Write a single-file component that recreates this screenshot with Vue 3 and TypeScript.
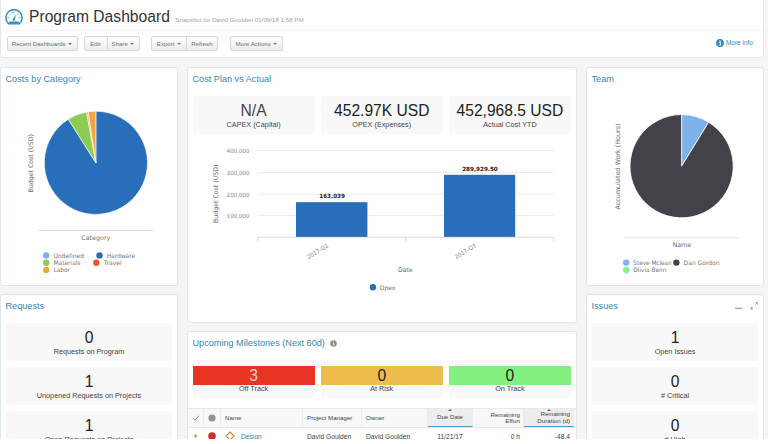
<script setup lang="ts">
interface Kpi { value: string; label: string; tone?: string }
interface Slice { from: number; to: number; color: string }
interface Legend { x: number; y: number; tx: number; w: number; text: string; color: string }

const costKpis: Kpi[] = [
  { value: 'N/A', label: 'CAPEX (Capital)', tone: 'muted' },
  { value: '452.97K USD', label: 'OPEX (Expenses)' },
  { value: '452,968.5 USD', label: 'Actual Cost YTD' },
]
const requests: Kpi[] = [
  { value: '0', label: 'Requests on Program' },
  { value: '1', label: 'Unopened Requests on Projects' },
  { value: '1', label: 'Open Requests on Projects' },
]
const issues: Kpi[] = [
  { value: '1', label: 'Open Issues' },
  { value: '0', label: '# Critical' },
  { value: '0', label: '# High' },
]
const milestones: Kpi[] = [
  { value: '3', label: 'Off Track', tone: 'red' },
  { value: '0', label: 'At Risk', tone: 'amber' },
  { value: '0', label: 'On Track', tone: 'green' },
]

const costSlices: Slice[] = [
  { from: 0, to: 327.6, color: '#286eb9' },
  { from: 327.6, to: 349.6, color: '#8bcd50' },
  { from: 349.6, to: 351.4, color: '#dd9a66' },
  { from: 351.4, to: 360, color: '#f2a53c' },
]
const teamSlices: Slice[] = [
  { from: 0, to: 31.6, color: '#7eb2ea' },
  { from: 31.6, to: 360, color: '#434248' },
]
const costLegend: Legend[] = [
  { x: 46.2, y: 255.4, tx: 53.5, w: 30.5, text: 'Undefined', color: '#7eb2ea' },
  { x: 99.5, y: 255.4, tx: 107, w: 28, text: 'Hardware', color: '#286eb9' },
  { x: 46.2, y: 262.7, tx: 53.5, w: 27, text: 'Materials', color: '#8bcd50' },
  { x: 96.3, y: 262.7, tx: 103.7, w: 18, text: 'Travel', color: '#ea5a28' },
  { x: 46.2, y: 270, tx: 53.5, w: 16.5, text: 'Labor', color: '#f2a53c' },
]
const teamLegend: Legend[] = [
  { x: 626.2, y: 262.6, tx: 633.3, w: 38.4, text: 'Steve Mclean', color: '#7eb2ea' },
  { x: 676.4, y: 262.6, tx: 683.6, w: 36, text: 'Dan Gordon', color: '#434248' },
  { x: 626.2, y: 270, tx: 633.3, w: 33, text: 'Olivia Benn', color: '#8bf08a' },
]
const grid = [
  { y: 150.5, text: '400,000' },
  { y: 172.5, text: '300,000' },
  { y: 194.2, text: '200,000' },
  { y: 215.5, text: '100,000' },
]

function wedge(cx: number, cy: number, r: number, s: Slice): string {
  const pt = (deg: number) => {
    const a = (deg * Math.PI) / 180
    return `${(cx + r * Math.sin(a)).toFixed(2)} ${(cy - r * Math.cos(a)).toFixed(2)}`
  }
  const large = s.to - s.from > 180 ? 1 : 0
  return `M${cx} ${cy}L${pt(s.from)}A${r} ${r} 0 ${large} 1 ${pt(s.to)}Z`
}
</script>

<template>
  <div class="page">
    <header class="head">
      <div class="title-row">
        <svg class="gauge" viewBox="0 0 18 16">
          <path d="M3.5 14.6H14.5C16.3 13 17.1 11 17.1 8.7A8.1 8 0 0 0 .9 8.7C.9 11 1.7 13 3.5 14.6Z" fill="#fff" stroke="#3592c8" stroke-width="1.6" stroke-linejoin="round" />
          <path d="M9 2.9V4.3M4.9 4.6L5.8 5.6M13.1 4.6L12.2 5.6M3.2 8.7H4.6M14.8 8.7H13.4M6.8 3.4L7.1 4.2" stroke="#3592c8" stroke-width=".9" />
          <path d="M10.8 5.2L10 10.6A1.2 1.2 0 1 1 8.1 9.7Z" fill="#3592c8" />
          <path d="M4 12.5H14L13.6 14.4H4.4Z" fill="#3592c8" />
        </svg>
        <h1>Program Dashboard</h1>
        <span class="snap">Snapshot for David Goulden 01/09/18 1:58 PM</span>
      </div>
      <div class="tools">
        <div class="group g1"><button>Recent Dashboards<i class="caret"></i></button></div>
        <div class="group g2"><button class="edit">Edit</button><button>Share<i class="caret"></i></button></div>
        <div class="group g3"><button class="export">Export<i class="caret"></i></button><button>Refresh</button></div>
        <div class="group g4"><button>More Actions<i class="caret"></i></button></div>
        <a class="more">
          <svg viewBox="0 0 8 8"><circle cx="4" cy="4" r="3.9" fill="#2f8fc6" /><path d="M3.2 3.4H4.5V6M3.1 6H5.1" fill="none" stroke="#fff" stroke-width=".9" /><circle cx="4" cy="2" r=".65" fill="#fff" /></svg>
          More info
        </a>
      </div>
    </header>

    <main class="board">
      <div class="col">
        <section class="card pie-card">
          <h2>Costs by Category</h2>
          <svg class="chart" viewBox="1 90 176 195">
            <path v-for="s in costSlices" :key="s.from" :d="wedge(95.9, 162.8, 51.6, s)" :fill="s.color" stroke="#fff" stroke-width=".6" />
            <text class="axis" transform="translate(33.2 192.5) rotate(-90)" textLength="58.5" lengthAdjust="spacingAndGlyphs">Budget Cost (USD)</text>
            <path d="M38.5 230.5H153" stroke="#d3dce8" stroke-width=".9" />
            <text class="axis" x="81.3" y="240" textLength="29" lengthAdjust="spacingAndGlyphs">Category</text>
            <g v-for="l in costLegend" :key="l.text">
              <circle :cx="l.x" :cy="l.y" r="3.2" :fill="l.color" />
              <text class="leg" :x="l.tx" :y="l.y + 2.4" :textLength="l.w" lengthAdjust="spacingAndGlyphs">{{ l.text }}</text>
            </g>
          </svg>
        </section>
        <section class="card grow">
          <h2>Requests</h2>
          <div class="stack">
            <div v-for="k in requests" :key="k.label" class="tile"><b>{{ k.value }}</b><span>{{ k.label }}</span></div>
          </div>
        </section>
      </div>

      <div class="col">
        <section class="card plan">
          <h2>Cost Plan vs Actual</h2>
          <div class="kpis">
            <div v-for="k in costKpis" :key="k.label" class="tile" :class="k.tone"><b>{{ k.value }}</b><span>{{ k.label }}</span></div>
          </div>
          <svg class="chart" viewBox="188 134 388 188">
            <g v-for="g in grid" :key="g.text">
              <path :d="`M257.5 ${g.y}H553.5`" stroke="#e6e6e6" stroke-width=".8" />
              <text class="tick" x="226.6" :y="g.y + 2.6" textLength="23" lengthAdjust="spacingAndGlyphs">{{ g.text }}</text>
            </g>
            <rect x="296" y="202.2" width="71.4" height="34.8" fill="#286eb9" />
            <rect x="444" y="174.8" width="71.2" height="62.2" fill="#286eb9" />
            <path d="M257.5 242V237.3H553.5V242M405.5 237.3V242" fill="none" stroke="#ccd6df" stroke-width=".8" />
            <text class="val" x="319.3" y="198.3" textLength="25.6" lengthAdjust="spacingAndGlyphs">163,039</text>
            <text class="val" x="462.2" y="171" textLength="35.6" lengthAdjust="spacingAndGlyphs">289,929.50</text>
            <text class="axis" transform="translate(218 223) rotate(-90)" textLength="58.5" lengthAdjust="spacingAndGlyphs">Budget Cost (USD)</text>
            <text class="tick" transform="translate(308.5 259.3) rotate(-32)" textLength="24" lengthAdjust="spacingAndGlyphs">2017-Q2</text>
            <text class="tick" transform="translate(456.2 259.3) rotate(-32)" textLength="24" lengthAdjust="spacingAndGlyphs">2017-Q3</text>
            <text class="axis" x="398" y="272" textLength="14.6" lengthAdjust="spacingAndGlyphs">Date</text>
            <circle cx="372.9" cy="287.2" r="3.2" fill="#286eb9" />
            <text class="leg" x="379.8" y="289.7" textLength="15.4" lengthAdjust="spacingAndGlyphs">Opex</text>
          </svg>
        </section>
        <section class="card grow">
          <h2>Upcoming Milestones (Next 60d)
            <svg class="hint" viewBox="0 0 8 8"><circle cx="4" cy="4" r="3.7" fill="#8a8a8a" /><path d="M3.2 3.5H4.4V6M3.1 6H5" fill="none" stroke="#fff" stroke-width=".8" /><circle cx="4" cy="2.1" r=".6" fill="#fff" /></svg>
          </h2>
          <div class="kpis bands">
            <div v-for="k in milestones" :key="k.label" class="tile" :class="k.tone"><b>{{ k.value }}</b><span>{{ k.label }}</span></div>
          </div>
          <div class="row thead">
            <div class="c ic"><svg viewBox="0 0 8 8"><path d="M1.2 4.4L3 6.2L6.8 1.8" fill="none" stroke="#777" stroke-width=".9" /></svg></div>
            <div class="c ic"><svg viewBox="0 0 8 8"><circle cx="4" cy="4" r="3.6" fill="#929292" /></svg></div>
            <div class="c">Name</div>
            <div class="c">Project Manager</div>
            <div class="c">Owner</div>
            <div class="c sorted mid"><i class="up"></i>Due Date</div>
            <div class="c right">Remaining<br />Effort</div>
            <div class="c right sorted"><i class="up"></i>Remaining<br />Duration (d)</div>
          </div>
          <div class="row">
            <div class="c ic"><svg viewBox="0 0 8 8"><path d="M2.6 1.4L5.4 4L2.6 6.6Z" fill="#6cbf2e" /></svg></div>
            <div class="c ic"><svg viewBox="0 0 8 8"><circle cx="4" cy="4" r="3.8" fill="#d42a22" /></svg></div>
            <div class="c name"><svg viewBox="0 0 10 10"><path d="M5 1L9 5L5 9L1 5Z" fill="#fff" stroke="#d08238" stroke-width="1.1" /></svg><a>Design</a></div>
            <div class="c">David Goulden</div>
            <div class="c">David Goulden</div>
            <div class="c mid">11/21/17</div>
            <div class="c right">0 h</div>
            <div class="c right">-48.4</div>
          </div>
        </section>
      </div>

      <div class="col">
        <section class="card pie-card">
          <h2>Team</h2>
          <svg class="chart" viewBox="587 90 176 195">
            <path v-for="s in teamSlices" :key="s.from" :d="wedge(681.6, 166.2, 51.6, s)" :fill="s.color" stroke="#fff" stroke-width=".8" />
            <text class="axis" transform="translate(619.6 209.5) rotate(-90)" textLength="86" lengthAdjust="spacingAndGlyphs">Accumulated Work (Hours)</text>
            <path d="M624.5 237.8H739" stroke="#d9e1ea" stroke-width=".8" />
            <text class="axis" x="672.4" y="247.2" textLength="18.8" lengthAdjust="spacingAndGlyphs">Name</text>
            <g v-for="l in teamLegend" :key="l.text">
              <circle :cx="l.x" :cy="l.y" r="3.2" :fill="l.color" />
              <text class="leg" :x="l.tx" :y="l.y + 2.4" :textLength="l.w" lengthAdjust="spacingAndGlyphs">{{ l.text }}</text>
            </g>
          </svg>
        </section>
        <section class="card grow">
          <h2 class="with-tools">Issues
            <svg class="wtools" viewBox="0 0 26 10"><path d="M3 7.2H10" stroke="#8c8c8c" stroke-width="1.1" /><path d="M22.3 4.7L24 3M21.7 5.3L20 7" stroke="#b5b5b5" stroke-width=".6" /><path d="M23.2 1.3H25.8V3.9ZM18.7 5.6V8.2H21.3Z" fill="#8c8c8c" /></svg>
          </h2>
          <div class="stack">
            <div v-for="k in issues" :key="k.label" class="tile"><b>{{ k.value }}</b><span>{{ k.label }}</span></div>
          </div>
        </section>
      </div>
    </main>
  </div>
</template>

<style>
body { background: #fff; }
</style>

<style scoped>
* { box-sizing: border-box; }
.page { width: 768px; height: 439px; overflow: hidden; background: #f5f5f5; font-family: "Liberation Sans", Arial, sans-serif; color: #333; }
.head { width: 764px; height: 58px; background: #fff; border: 1px solid #e4e9ec; border-top: 0; border-radius: 0 0 3px 3px; }
.title-row { height: 31px; display: flex; align-items: center; padding: 3px 0 0 4px; border-bottom: 1px solid #f3f3f3; }
.gauge { width: 18px; height: 16px; margin-right: 6px; }
h1 { margin: 0; font-size: 15.65px; font-weight: 400; line-height: 20px; color: #333; white-space: nowrap; }
.snap { margin: 6px 0 0 5.5px; font-size: 6.2px; color: #a3a3a3; white-space: nowrap; }
.tools { display: flex; align-items: flex-start; padding: 5px 10px 0 5.5px; }
.group { display: flex; height: 15px; border: 1px solid #d8d8d8; border-radius: 2px; background: linear-gradient(#fff, #ececec); }
.g1 { width: 71px; margin-right: 6px; }
.g2 { width: 56px; margin-right: 11.4px; }
.g3 { width: 67px; margin-right: 12px; }
.g4 { width: 53px; }
button { flex: 1; display: flex; align-items: center; justify-content: center; padding: 0; border: 0; background: none; font: 6.1px "Liberation Sans", Arial, sans-serif; color: #707070; white-space: nowrap; }
button + button { border-left: 1px solid #d8d8d8; }
.edit { flex: 0 0 22px; }
.export { flex: 0 0 34px; }
.caret { margin-left: 2.5px; border: 2px solid transparent; border-top-color: #777; border-bottom: 0; }
.more { margin-left: auto; display: flex; align-items: center; gap: 2px; height: 13px; font-size: 6.5px; color: #3a8cbb; white-space: nowrap; }
.more svg { width: 8px; height: 8px; }
.board { display: grid; grid-template-columns: 178px 390px 178px; gap: 9px; height: 390px; margin-top: 9px; }
.col { display: flex; flex-direction: column; gap: 8px; min-width: 0; }
.card { background: #fff; border: 1px solid #dde7ed; border-radius: 3px; overflow: hidden; flex: none; }
.pie-card { height: 219px; }
.plan { height: 256px; }
.grow { flex: 1 0 200px; }
h2 { display: flex; align-items: center; margin: 0; height: 22px; padding: 0 5px 0 4.5px; font-size: 9.15px; font-weight: 400; color: #3787b0; white-space: nowrap; }
.chart { display: block; width: 100%; }
.pie-card .chart { height: 195px; }
.plan .chart { height: 188px; }
.axis { font: 6.4px "DejaVu Sans", sans-serif; fill: #707070; }
.leg { font: 6.1px "DejaVu Sans", sans-serif; fill: #757575; }
.tick { font: 5.9px "DejaVu Sans", sans-serif; fill: #858585; }
.val { font: bold 5.7px "DejaVu Sans", sans-serif; fill: #222; }
.stack { display: flex; flex-direction: column; gap: 6px; padding: 6px 5px 0; }
.tile { display: flex; flex-direction: column; align-items: center; height: 38px; padding-top: 6px; background: #f8f8f8; border-radius: 2px; white-space: nowrap; }
.tile b { font-weight: 400; font-size: 15.6px; line-height: 18px; color: #222; }
.tile span { font-size: 7.25px; line-height: 9px; color: #444; }
.muted b { color: #444; }
.kpis { display: grid; grid-template-columns: repeat(3, 1fr); gap: 6px; padding: 6px 5px 0 4.5px; }
.plan .kpis { height: 44px; }
.bands { height: 54px; }
.bands .tile b { width: 100%; height: 19px; line-height: 20px; text-align: center; }
.bands .tile span { margin-top: -1px; }
.tile.red b { background: #e93323; color: #f9d2cc; }
.tile.amber b { background: #ecbc4c; }
.tile.green b { background: #81f07f; }
.tile.muted b { color: #444; }
.hint { width: 7px; height: 7px; margin-left: 5px; }
.with-tools { justify-content: space-between; }
.wtools { width: 26px; height: 10px; }
.row { display: grid; grid-template-columns: 16px 17px 82px 59px 66px 45px 51px 50px; height: 16px; font-size: 6.7px; line-height: 7px; color: #444; white-space: nowrap; }
.thead { height: 20px; background: #f8f8f8; border-top: 1px solid #e8e8e8; border-bottom: 1px solid #e8e8e8; font-size: 6.2px; line-height: 6.3px; }
.c { position: relative; display: flex; align-items: center; padding: 0 4px; min-width: 0; border-right: 1px solid #ececec; }
.row:not(.thead) .c { border-right-color: transparent; }
.ic { justify-content: center; padding: 0; }
.ic svg { width: 8px; height: 8px; }
.mid { justify-content: center; }
.right { justify-content: flex-end; text-align: right; padding-right: 3px; }
.sorted { background: #ededed; border-bottom: 1px solid #4a9cc8; }
.up { position: absolute; top: 0; left: 50%; margin-left: -2px; border: 2px solid transparent; border-bottom-color: #666; border-top: 0; }
.name svg { width: 10px; height: 10px; margin-right: 6px; }
.name a { color: #3787b0; }
</style>
